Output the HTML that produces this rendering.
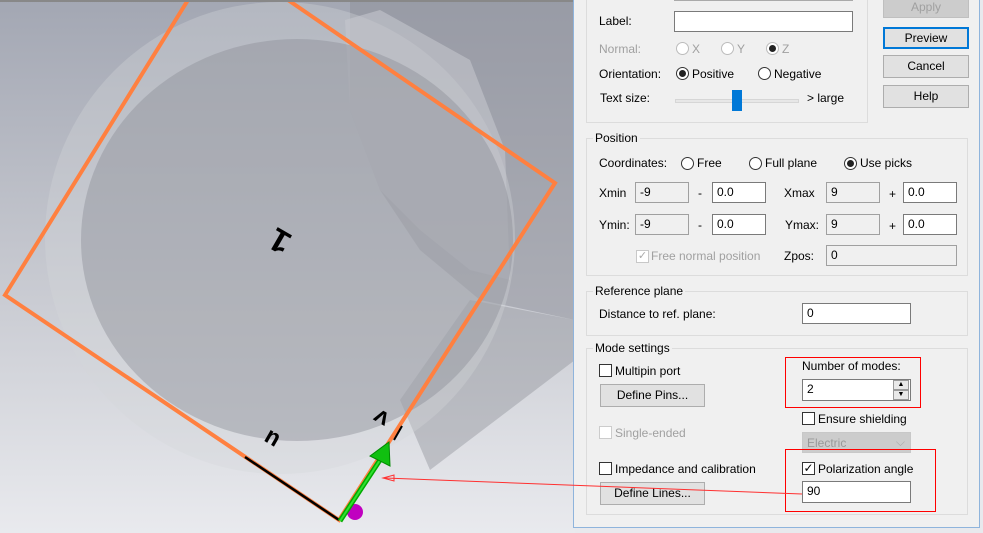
<!DOCTYPE html>
<html><head><meta charset="utf-8"><style>
*{margin:0;padding:0;box-sizing:border-box}
body{width:983px;height:533px;overflow:hidden;position:relative;background:#e8e9ed;font-family:"Liberation Sans",Arial,sans-serif;font-size:12px;color:#000}
.a{position:absolute;white-space:nowrap}
.dlg{position:absolute;left:573px;top:-2px;width:407px;height:530px;background:#f0f0f0;border:1px solid #8fb4dc}
.gb{position:absolute;border:1px solid #dcdcdc}
.gl{position:absolute;background:#f0f0f0;padding:0 2px}
.tb{position:absolute;background:#fff;border:1px solid #7a7a7a;height:21px;padding:2px 4px;font-size:12px;line-height:15px}
.tb.g{background:#f0f0f0;border-color:#a0a0a0}
.btn{position:absolute;background:#e1e1e1;border:1px solid #adadad;text-align:center;line-height:20px}
.r{position:absolute;width:13px;height:13px;border:1px solid #333;border-radius:50%;background:#fff}
.r.on::after{content:"";position:absolute;left:2px;top:2px;width:7px;height:7px;border-radius:50%;background:#222}
.r.dis{border-color:#bcbcbc}
.cb{position:absolute;width:13px;height:13px;border:1px solid #333;background:#fff}
.dis{color:#a0a0a0}
.redbox{position:absolute;border:1px solid #ff0000}
</style></head><body>
<svg width="575" height="533" style="position:absolute;left:0;top:0">
<defs><linearGradient id="bg" x1="0" y1="0" x2="0" y2="1"><stop offset="0" stop-color="#a3a7b3"/><stop offset="0.55" stop-color="#c9cbd2"/><stop offset="1" stop-color="#e9eaee"/></linearGradient></defs>
<rect width="575" height="533" fill="url(#bg)"/>
<polygon points="350,0 575,0 575,320 480,300 420,250 380,190 350,110" fill="#8f929b" opacity="0.55"/>
<polygon points="470,300 575,320 575,360 430,470 400,400" fill="#8a8c93" opacity="0.4"/>
<ellipse cx="280" cy="238" rx="235" ry="236" fill="#d4d6db" opacity="0.35"/>
<path d="M345,20 L380,10 L470,60 L505,150 L510,280 L470,270 L420,230 L380,190 L350,110 Z" fill="#c4c6cd" opacity="0.6"/>
<ellipse cx="297" cy="240" rx="216" ry="201" fill="#8e9098" opacity="0.45"/>
<polygon points="5,295 188,0 288,0 555,183 339,520" fill="none" stroke="#ff8040" stroke-width="4" stroke-linejoin="miter"/>
<line x1="245" y1="457" x2="339" y2="520" stroke="#000" stroke-width="2.5"/>
<line x1="402" y1="426" x2="394" y2="440" stroke="#000" stroke-width="2"/>
<circle cx="355" cy="512" r="8" fill="#c000c0"/>
<line x1="340" y1="521" x2="380" y2="460" stroke="#0a0" stroke-width="5"/>
<line x1="340" y1="521" x2="380" y2="460" stroke="#30e030" stroke-width="2"/>
<polygon points="389,442 390,466 370,456" fill="#10c010" stroke="#080" stroke-width="1"/>
<text x="262" y="252" font-size="34" font-weight="bold" transform="rotate(-150 276 240)" font-family="Liberation Mono">1</text>
<text x="258" y="450" font-size="24" font-weight="bold" transform="rotate(-150 268 440)" font-family="Liberation Mono">u</text>
<text x="368" y="427" font-size="24" font-weight="bold" transform="rotate(-150 378 418)" font-family="Liberation Mono">v</text>
<line x1="0" y1="1" x2="575" y2="1" stroke="#888" stroke-width="2"/>
</svg>
<div class="dlg"></div>
<div class="gb" style="left:586px;top:-5px;width:282px;height:128px"></div>
<div class="tb" style="left:674px;top:-10px;width:179px;height:11px;border-color:#aaa"></div>
<div class="a" style="left:599px;top:14px">Label:</div>
<div class="tb" style="left:674px;top:11px;width:179px"></div>
<div class="a dis" style="left:599px;top:42px">Normal:</div>
<div class="r dis" style="left:676px;top:42px"></div><div class="a dis" style="left:692px;top:42px">X</div>
<div class="r dis" style="left:721px;top:42px"></div><div class="a dis" style="left:737px;top:42px">Y</div>
<div class="r dis on" style="left:766px;top:42px;"></div><div class="a dis" style="left:782px;top:42px">Z</div>
<div class="a" style="left:599px;top:67px">Orientation:</div>
<div class="r on" style="left:676px;top:67px"></div><div class="a" style="left:692px;top:67px">Positive</div>
<div class="r" style="left:758px;top:67px"></div><div class="a" style="left:774px;top:67px">Negative</div>
<div class="a" style="left:600px;top:91px">Text size:</div>
<div class="a" style="left:675px;top:99px;width:124px;height:4px;background:#e7e7e7;border:1px solid #d6d6d6"></div>
<div class="a" style="left:732px;top:90px;width:10px;height:21px;background:#0078d7"></div>
<div class="a" style="left:807px;top:91px">&gt; large</div>
<div class="btn" style="left:883px;top:-4px;width:86px;height:22px;color:#a0a0a0;background:#ccc;border-color:#bfbfbf">Apply</div>
<div class="btn" style="left:883px;top:27px;width:86px;height:22px;border:2px solid #0078d7;line-height:18px">Preview</div>
<div class="btn" style="left:883px;top:55px;width:86px;height:23px">Cancel</div>
<div class="btn" style="left:883px;top:85px;width:86px;height:23px">Help</div>
<div class="gb" style="left:586px;top:138px;width:382px;height:138px"></div>
<div class="gl" style="left:593px;top:131px">Position</div>
<div class="a" style="left:599px;top:156px">Coordinates:</div>
<div class="r" style="left:681px;top:157px"></div><div class="a" style="left:697px;top:156px">Free</div>
<div class="r" style="left:749px;top:157px"></div><div class="a" style="left:765px;top:156px">Full plane</div>
<div class="r on" style="left:844px;top:157px"></div><div class="a" style="left:860px;top:156px">Use picks</div>
<div class="a" style="left:599px;top:186px">Xmin</div>
<div class="tb g" style="left:635px;top:182px;width:54px">-9</div>
<div class="a" style="left:698px;top:186px">-</div>
<div class="tb" style="left:712px;top:182px;width:54px">0.0</div>
<div class="a" style="left:784px;top:186px">Xmax</div>
<div class="tb g" style="left:826px;top:182px;width:54px">9</div>
<div class="a" style="left:889px;top:187px">+</div>
<div class="tb" style="left:903px;top:182px;width:54px">0.0</div>
<div class="a" style="left:599px;top:218px">Ymin:</div>
<div class="tb g" style="left:635px;top:214px;width:54px">-9</div>
<div class="a" style="left:698px;top:218px">-</div>
<div class="tb" style="left:712px;top:214px;width:54px">0.0</div>
<div class="a" style="left:785px;top:218px">Ymax:</div>
<div class="tb g" style="left:826px;top:214px;width:54px">9</div>
<div class="a" style="left:889px;top:219px">+</div>
<div class="tb" style="left:903px;top:214px;width:54px">0.0</div>
<div class="cb" style="left:636px;top:250px;border-color:#c8c8c8;color:#aaa;font-size:11px;line-height:11px;text-align:center">✓</div>
<div class="a dis" style="left:651px;top:249px">Free normal position</div>
<div class="a" style="left:784px;top:249px">Zpos:</div>
<div class="tb g" style="left:826px;top:245px;width:131px">0</div>
<div class="gb" style="left:586px;top:291px;width:382px;height:45px"></div>
<div class="gl" style="left:593px;top:284px">Reference plane</div>
<div class="a" style="left:599px;top:307px">Distance to ref. plane:</div>
<div class="tb" style="left:802px;top:303px;width:109px">0</div>
<div class="gb" style="left:586px;top:348px;width:382px;height:167px"></div>
<div class="gl" style="left:593px;top:341px">Mode settings</div>
<div class="cb" style="left:599px;top:364px"></div><div class="a" style="left:615px;top:364px">Multipin port</div>
<div class="btn" style="left:600px;top:384px;width:105px;height:23px">Define Pins...</div>
<div class="cb" style="left:599px;top:426px;border-color:#ccc"></div><div class="a dis" style="left:615px;top:426px">Single-ended</div>
<div class="cb" style="left:599px;top:462px"></div><div class="a" style="left:615px;top:462px">Impedance and calibration</div>
<div class="btn" style="left:600px;top:482px;width:105px;height:23px">Define Lines...</div>
<div class="redbox" style="left:785px;top:357px;width:136px;height:51px"></div>
<div class="a" style="left:802px;top:359px">Number of modes:</div>
<div class="tb" style="left:802px;top:379px;width:109px;height:22px">2</div>
<div class="a" style="left:893px;top:380px;width:16px;height:10px;background:#e8e8e8;border:1px solid #999;font-size:7px;line-height:8px;text-align:center">▲</div>
<div class="a" style="left:893px;top:390px;width:16px;height:10px;background:#e8e8e8;border:1px solid #999;font-size:7px;line-height:8px;text-align:center">▼</div>
<div class="cb" style="left:802px;top:412px"></div><div class="a" style="left:818px;top:412px">Ensure shielding</div>
<div class="a" style="left:802px;top:432px;width:109px;height:21px;background:#ccc;border:1px solid #c8c8c8;color:#999;padding:3px 4px">Electric<span style="position:absolute;right:5px;top:2px;color:#aaa">⌵</span></div>
<div class="redbox" style="left:785px;top:449px;width:151px;height:63px"></div>
<div class="cb" style="left:802px;top:462px;font-size:12px;line-height:11px;text-align:center">✓</div><div class="a" style="left:818px;top:462px">Polarization angle</div>
<div class="tb" style="left:802px;top:481px;width:109px;height:22px">90</div>
<svg width="983" height="533" style="position:absolute;left:0;top:0;pointer-events:none">
<line x1="385" y1="478" x2="802" y2="494" stroke="#ff3030" stroke-width="1"/>
<polygon points="383,478 394,475 394,481" fill="none" stroke="#ff3030" stroke-width="1"/>
</svg>
</body></html>
